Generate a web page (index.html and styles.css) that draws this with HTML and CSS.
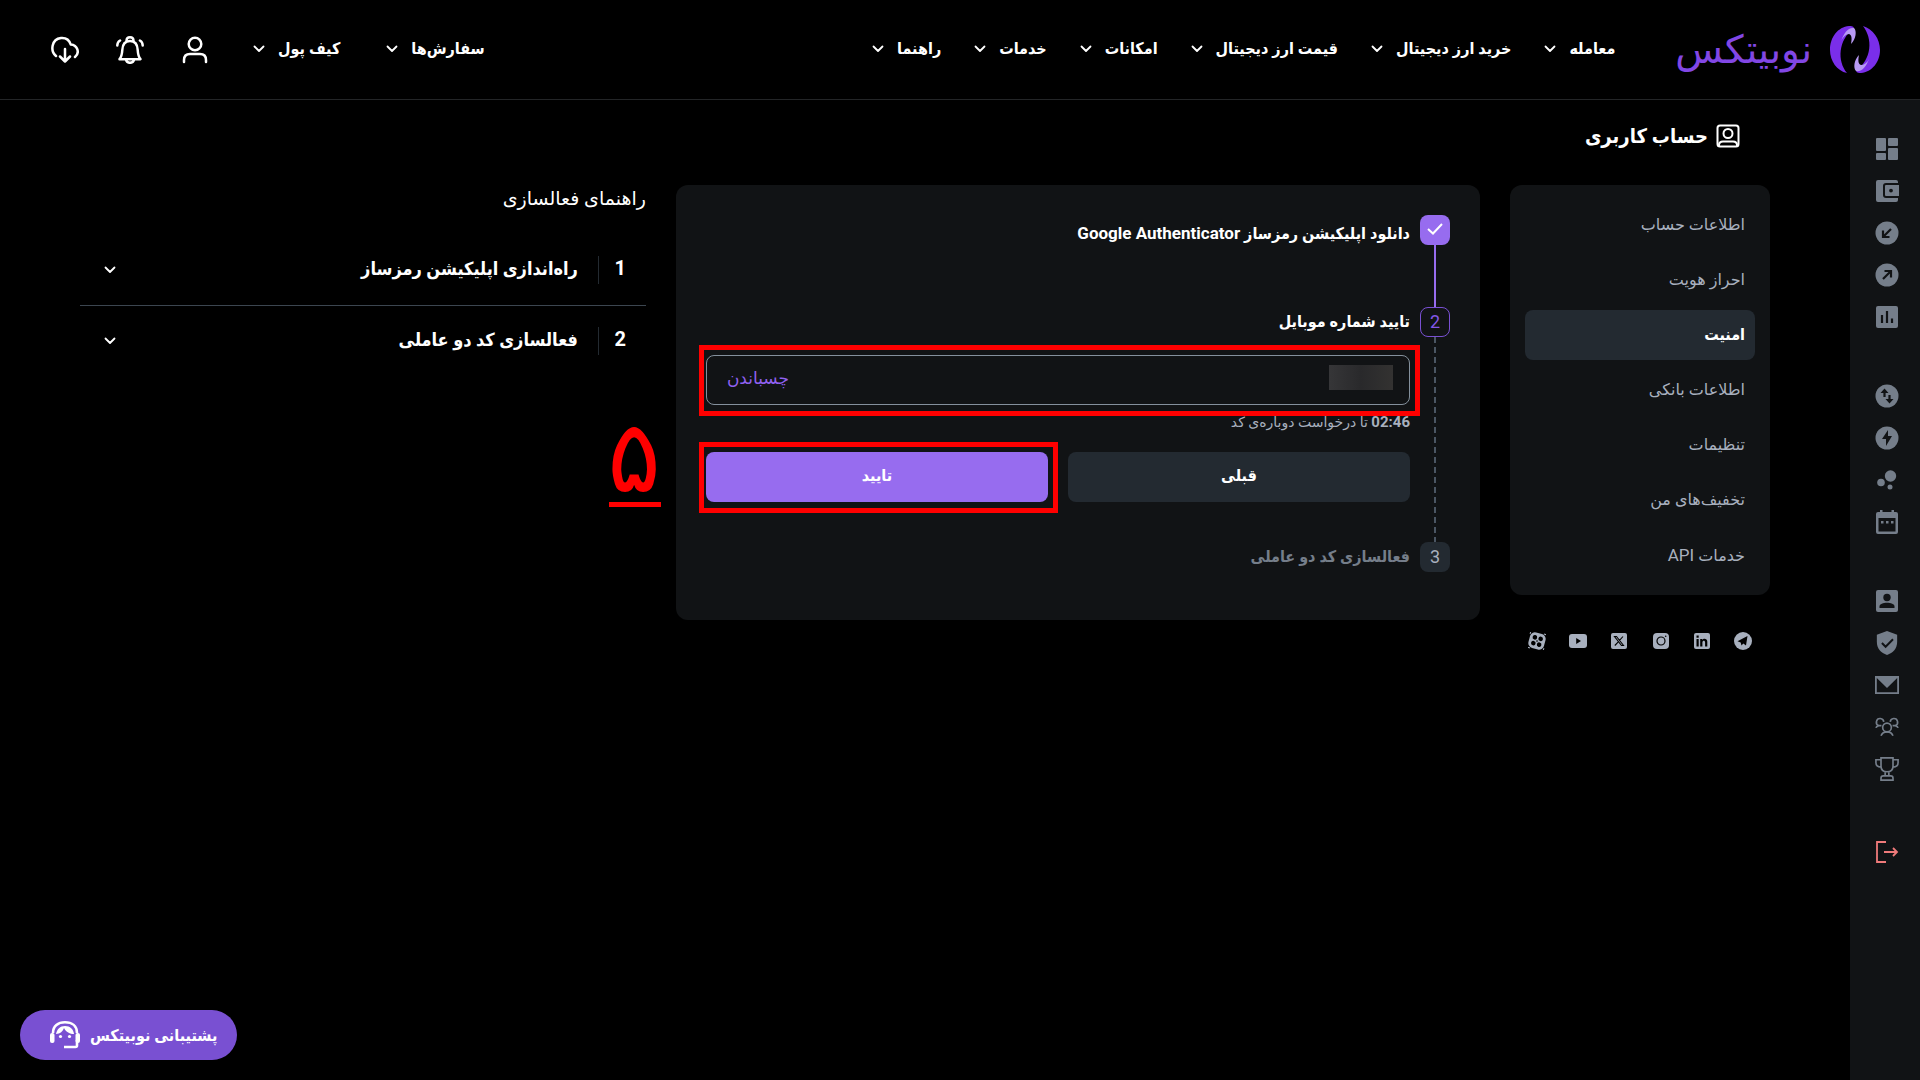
FILE: index.html
```html
<!DOCTYPE html>
<html lang="fa" dir="rtl">
  <head>
    <meta charset="UTF-8" />
    <meta name="viewport" content="width=device-width, initial-scale=1.0" />
    <title>نوبیتکس | امنیت</title>
    <link rel="stylesheet" href="styles.css">
  </head>
  <body>
    <svg class="sprite" aria-hidden="true">
      <symbol id="chevron" viewBox="0 0 12 12">
        <path d="M1.500 3.500 6 8l4.500-4.500" fill="none" stroke="currentColor" stroke-width="1.800" stroke-linecap="round" stroke-linejoin="round" />
      </symbol>
    </svg>

    <header class="header">
      <a href="#" class="logo">
        <svg class="logo-mark" viewBox="0 0 50 48">
          <path d="M19 0C8 1 0 11 0 24c0 11 7 21 17 23C7 35 8 14 24 2 23 0 21 0 19 0z" fill="#7a2eea" />
          <path d="M11 15C14 7 18 1 24 2c3 3 2 11-3 16 1-5 1-9-2-10-3 0-6 3-8 7z" fill="#b79af3" />
          <path d="M31 47c11-1 19-11 19-23 0-11-7-21-17-24 10 13 9 33-7 45 1 2 3 2 5 2z" fill="#7a2eea" />
          <path d="M39 33c-3 8-7 13-13 12-3-3-2-11 3-16-1 5-1 9 2 10 3 0 6-2 8-6z" fill="#b79af3" />
        </svg>
        <span class="logo-text">نوبیتکس</span>
      </a>
      <nav class="nav">
        <a href="#">معامله <svg class="chevron"><use href="#chevron" /></svg></a>
        <a href="#">خرید ارز دیجیتال <svg class="chevron"><use href="#chevron" /></svg></a>
        <a href="#">قیمت ارز دیجیتال <svg class="chevron"><use href="#chevron" /></svg></a>
        <a href="#">امکانات <svg class="chevron"><use href="#chevron" /></svg></a>
        <a href="#">خدمات <svg class="chevron"><use href="#chevron" /></svg></a>
        <a href="#">راهنما <svg class="chevron"><use href="#chevron" /></svg></a>
      </nav>
      <nav class="nav nav-user">
        <a href="#">سفارش‌ها <svg class="chevron"><use href="#chevron" /></svg></a>
        <a href="#">کیف پول <svg class="chevron"><use href="#chevron" /></svg></a>
      </nav>
      <div class="header-icons">
        <button aria-label="حساب">
          <svg viewBox="0 0 28 28"><circle cx="14" cy="8" r="6.300" /><path d="M3 26v-2c0-4 2-6 6-6h10c4 0 6 2 6 6v2" /></svg>
        </button>
        <button aria-label="اعلان‌ها">
          <svg viewBox="0 0 28 28"><path d="M3.500 23.200C5.500 21 6 19 6.300 14 6.600 7.500 9 5 14 5s7.400 2.500 7.700 9c.3 5 .8 7 2.800 9.200z" /><path d="M10.500 5C10.500 2.500 12 1.300 14 1.300S17.500 2.500 17.500 5M10 23.500c.5 2.500 2 3.300 4 3.300s3.500-.8 4-3.300M1.300 9.500c0-2.500 1-4 2.800-5M26.700 9.500c0-2.500-1-4-2.800-5" /></svg>
        </button>
        <button aria-label="دانلود اپلیکیشن">
          <svg viewBox="0 0 28 28"><path d="M5 20C-1 15 .5 3 10 2c5-.4 8.500 2.500 9.700 6.500 7 .5 9.300 8.500 4.300 12.500M14 13v12M9 20.500l5 5 5-5" /></svg>
        </button>
      </div>
    </header>

    <div class="page">
      <aside class="rail">
        <div class="rail-group">
          <a href="#" aria-label="داشبورد"><svg viewBox="0 0 24 24"><rect x="1" y="1" width="10" height="13" rx="1" /><rect x="13" y="1" width="10" height="8" rx="1" /><rect x="1" y="16" width="10" height="7" rx="1" /><rect x="13" y="11" width="10" height="12" rx="1" /></svg></a>
          <a href="#" aria-label="کیف پول"><svg viewBox="0 0 24 24"><path d="M3 1h18a2 2 0 0 1 2 2v1H11a3 3 0 0 0-3 3v9a3 3 0 0 0 3 3h12v2a2 2 0 0 1-2 2H3a2 2 0 0 1-2-2V3a2 2 0 0 1 2-2z" /><path fill-rule="evenodd" d="M11 6h13v11H11a1 1 0 0 1-1-1V7a1 1 0 0 1 1-1zm5 3.700a1.900 1.900 0 1 0 0 3.800 1.900 1.900 0 0 0 0-3.800z" /></svg></a>
          <a href="#" aria-label="واریز"><svg viewBox="0 0 24 24"><circle cx="12" cy="12" r="11.500" /><path class="cut" d="m16 8-8 8M8 9.500V16h6.500" /></svg></a>
          <a href="#" aria-label="برداشت"><svg viewBox="0 0 24 24"><circle cx="12" cy="12" r="11.500" /><path class="cut" d="m8 16 8-8M9.500 8H16v6.500" /></svg></a>
          <a href="#" aria-label="گزارش"><svg viewBox="0 0 24 24"><rect x="1" y="1" width="22" height="22" rx="2" /><path class="cut" d="M7 10v8M12 6v12M17 13.500V18" /></svg></a>
        </div>
        <div class="rail-group">
          <a href="#" aria-label="معامله"><svg viewBox="0 0 24 24"><circle cx="12" cy="12" r="11.500" /><path class="cut" d="M9.500 13V7M14.500 11v6" /><path class="hole" d="m9.500 4.500 4 4.500h-8zM14.500 19.500l4-4.500h-8z" /></svg></a>
          <a href="#" aria-label="معامله سریع"><svg viewBox="0 0 24 24"><circle cx="12" cy="12" r="11.500" /><path class="hole" d="M13 4 7 13h4v7l6-10h-4z" /></svg></a>
          <a href="#" aria-label="نمودار"><svg viewBox="0 0 24 24"><circle cx="15.500" cy="8" r="5.700" /><circle cx="6" cy="14.500" r="3.800" /><circle cx="15" cy="19" r="2.500" /></svg></a>
          <a href="#" aria-label="تقویم"><svg viewBox="0 0 24 24"><path fill-rule="evenodd" d="M5 0h2.500v2h9V0H19v2h2a2 2 0 0 1 2 2v18a2 2 0 0 1-2 2H3a2 2 0 0 1-2-2V4a2 2 0 0 1 2-2h2zM3.500 8v13.500h17V8zM6 11h2.500v2.500H6zm5 0h2.500v2.500H11zm5 0h2.500v2.500H16z" /></svg></a>
        </div>
        <div class="rail-group">
          <a href="#" aria-label="حساب کاربری"><svg viewBox="0 0 24 24"><rect x="1" y="1" width="22" height="22" rx="2" /><circle class="hole" cx="12" cy="8.500" r="3.700" /><path class="hole" d="M4.500 19v-1.500c0-5 15-5 15 0V19z" /></svg></a>
          <a href="#" aria-label="امنیت"><svg viewBox="0 0 22 26"><path d="M11 0 0 4v8c0 7 4.500 12 11 14 6.500-2 11-7 11-14V4z" /><path class="cut" d="m5.500 13 4 4 8-8" /></svg></a>
          <a href="#" aria-label="پیام‌ها"><svg viewBox="0 0 24 24"><path fill-rule="evenodd" d="M0 3h24v18H0zm1.800 2v14.300h20.400V5L12 15z" /></svg></a>
          <a href="#" aria-label="معرفی دوستان"><svg class="line" viewBox="0 0 26 24"><circle cx="13" cy="12.500" r="4.700" /><path d="M6.500 21.500c1-2.500 3-4.200 6.500-4.200s5.500 1.700 6.500 4.200M9.500 6.500a4 4 0 1 0-5.500 4C2.500 11 1.300 11.700 1 13M4 10.500h3M16.500 6.500a4 4 0 1 1 5.500 4c1.500.5 2.700 1.200 3 2.500M22 10.500h-3" /></svg></a>
          <a href="#" aria-label="جوایز"><svg class="line" viewBox="0 0 26 26"><path d="M6.500 1h13v9c0 4-2.500 6-6.500 6s-6.500-2-6.500-6zM6.500 3H1v3c0 3 2 5 5.500 5M19.500 3H25v3c0 3-2 5-5.500 5M11 16v4M15 16v4M6.500 25v-2c0-1.500 1-2.500 2.500-2.500h8c1.500 0 2.500 1 2.500 2.500v2z" /></svg></a>
        </div>
        <a href="#" class="logout" aria-label="خروج"><svg class="line" viewBox="0 0 24 24"><path d="M11 2H2v20h9M9 12h13M18 8l4 4-4 4" /></svg></a>
      </aside>

      <main class="main">
        <h1 class="page-title">
          <svg viewBox="0 0 24 24"><rect x="1.500" y="1.500" width="21" height="21" rx="2.500" /><circle cx="12" cy="9.500" r="4.500" /><path d="M3 22v-1c0-2.500 2-3.500 4-3.500h10c2 0 4 1 4 3.500v1" /></svg>
          حساب کاربری
        </h1>

        <div class="columns">
          <div>
            <ul class="menu">
              <li><a href="#">اطلاعات حساب</a></li>
              <li><a href="#">احراز هویت</a></li>
              <li><a href="#" class="active">امنیت</a></li>
              <li><a href="#">اطلاعات بانکی</a></li>
              <li><a href="#">تنظیمات</a></li>
              <li><a href="#">تخفیف‌های من</a></li>
              <li><a href="#">خدمات <span class="latin">API</span></a></li>
            </ul>
            <div class="socials">
              <a href="#" aria-label="تلگرام"><svg viewBox="0 0 18 18"><circle cx="9" cy="9" r="9" /><path class="hole" d="M13.500 4 3.500 9.200l3.200 1.200.8 3.200 1.800-2 2.700 2z" /></svg></a>
              <a href="#" aria-label="لینکدین"><svg viewBox="0 0 18 18"><rect x="1" y="1" width="16" height="16" rx="2" /><path class="hole" d="M3.500 7h2.200v7.500H3.500zM3.500 3.500h2.200v2.200H3.500zM7.200 7h2.100v1c1.200-1.900 5-1.600 5 1.700v4.800h-2.200v-4c0-2.400-2.700-2.100-2.700 0v4H7.200z" /></svg></a>
              <a href="#" aria-label="اینستاگرام"><svg viewBox="0 0 18 18"><rect x="1" y="1" width="16" height="16" rx="4" /><circle cx="9" cy="9" r="4" fill="none" stroke="#000" stroke-width="1.200" /><circle class="hole" cx="13.700" cy="4.300" r=".8" /></svg></a>
              <a href="#" aria-label="ایکس"><svg viewBox="0 0 18 18"><rect x="1" y="1" width="16" height="16" rx="2" /><path d="M4.500 4.500h2l7 9h-2zM13 4.500l-3.500 3.800M8.300 9.800 4.800 13.500" fill="none" stroke="#000" stroke-width="1.100" /></svg></a>
              <a href="#" aria-label="یوتیوب"><svg viewBox="0 0 18 18"><rect x="0" y="2" width="18" height="14" rx="3" /><path class="hole" d="m7.200 6 4.800 3-4.800 3z" /></svg></a>
              <a href="#" aria-label="آپارات"><svg viewBox="0 0 18 18"><g transform="rotate(15 9 9)"><rect x="1" y="1" width="16" height="16" rx="5" /><circle class="hole" cx="6" cy="6" r="2.300" /><circle class="hole" cx="12" cy="6" r="2.300" /><circle class="hole" cx="6" cy="12" r="2.300" /><circle class="hole" cx="12" cy="12" r="2.300" /><circle class="hole" cx="9" cy="9" r=".8" /><path d="M.5 4V2.500a2 2 0 0 1 2-2H4M14 .5h1.500a2 2 0 0 1 2 2V4M17.500 14v1.500a2 2 0 0 1-2 2H14M4 17.500H2.500a2 2 0 0 1-2-2V14" fill="none" stroke="currentColor" /></g></svg></a>
            </div>
          </div>

          <section class="card">
            <div class="step done">
              <div class="step-track">
                <span class="step-box"><svg viewBox="0 0 16 12"><path d="m1 6 5 4.500L15 1" fill="none" stroke="#fff" stroke-width="2" /></svg></span>
              </div>
              <h2 class="step-title">دانلود اپلیکیشن رمزساز <span class="latin">Google Authenticator</span></h2>
            </div>

            <div class="step current">
              <div class="step-track"><span class="step-box">2</span></div>
              <form class="step-body" onsubmit="return false">
                <h2 class="step-title"><label for="code">تایید شماره موبایل</label></h2>
                <div class="field">
                  <input type="text" id="code" />
                  <span class="masked"></span>
                  <button type="button" class="paste">چسباندن</button>
                  <span class="highlight"></span>
                </div>
                <p class="timer"><b>02:46</b> تا درخواست دوباره‌ی کد</p>
                <div class="actions">
                  <button type="button" class="btn">قبلی</button>
                  <div class="confirm">
                    <button type="submit" class="btn btn-primary">تایید</button>
                    <span class="highlight"></span>
                    <span class="step-mark">۵</span>
                  </div>
                </div>
              </form>
            </div>

            <div class="step">
              <div class="step-track"><span class="step-box">3</span></div>
              <h2 class="step-title">فعالسازی کد دو عاملی</h2>
            </div>
          </section>

          <section class="guide">
            <h2>راهنمای فعالسازی</h2>
            <button class="guide-item">
              <span class="guide-number">1</span>
              <span class="guide-text">راه‌اندازی اپلیکیشن رمزساز</span>
              <svg class="chevron"><use href="#chevron" /></svg>
            </button>
            <button class="guide-item">
              <span class="guide-number">2</span>
              <span class="guide-text">فعالسازی کد دو عاملی</span>
              <svg class="chevron"><use href="#chevron" /></svg>
            </button>
          </section>
        </div>
      </main>
    </div>

    <button class="support">
      پشتیبانی نوبیتکس
      <svg viewBox="0 0 30 28"><path d="M3 12C3 5 8 1.300 15 1.300S27 5 27 12M27 19v5.500c0 .8-.7 1.500-1.500 1.500H14" fill="none" stroke="#fff" stroke-width="2.600" /><rect x="0" y="12" width="4.500" height="10" rx="2" /><rect x="25.500" y="12" width="4.500" height="10" rx="2" /><path d="M6 13c1-5 4-8 9-8s8.500 3 9 8c-4 0-8-2-10-6-1 3-4 6-8 6z" /><circle cx="10.500" cy="15.500" r="1.600" /><circle cx="19.500" cy="15.500" r="1.600" /></svg>
    </button>
  </body>
</html>
```
FILE: styles.css
```css
* {
  box-sizing: border-box;
  margin: 0;
  padding: 0;
}
body {
  display: flex;
  flex-direction: column;
  min-height: 100vh;
  background-color: #000;
  color: #fff;
  font-family: Roboto, "DejaVu Sans", sans-serif;
  font-size: 16px;
}
a {
  color: inherit;
  text-decoration: none;
}
button {
  border: none;
  background: none;
  color: inherit;
  font-family: inherit;
  cursor: pointer;
}
svg {
  display: block;
  fill: currentColor;
}
/* bold text uses the narrower cut */
.nav,
.page-title,
.menu .active,
.step-title,
.btn,
.guide-item,
.support {
  font-family: Roboto, "DejaVu Sans Condensed", "DejaVu Sans", sans-serif;
  font-weight: bold;
}
.latin {
  font-size: 17px;
}
.sprite {
  position: absolute;
  width: 0;
  height: 0;
}
.chevron {
  width: 12px;
  height: 12px;
}

/* header */
.header {
  display: flex;
  align-items: center;
  height: 100px;
  padding: 0 40px 0 51px;
  border-bottom: 1px solid #232527;
}
.logo {
  display: flex;
  align-items: center;
  gap: 18px;
  margin-left: 60px;
}
.logo-mark {
  width: 50px;
  height: 48px;
}
.logo-text {
  color: #8247e5;
  font-size: 39px;
  line-height: 40px;
}
.nav {
  display: flex;
  gap: 33px;
  padding-bottom: 2px;
  font-size: 16px;
  white-space: nowrap;
}
.nav a {
  display: flex;
  align-items: center;
  gap: 13px;
}
.nav-user {
  gap: 46px;
  margin-right: auto;
}
.header-icons {
  display: flex;
  gap: 37px;
  margin-right: 44px;
}
.header-icons svg {
  width: 28px;
  height: 28px;
  fill: none;
  stroke: #fff;
  stroke-width: 2.500px;
  stroke-linecap: round;
  stroke-linejoin: round;
}

.page {
  display: flex;
  flex: 1;
}

/* icon rail */
.rail {
  display: flex;
  flex-direction: column;
  align-items: center;
  gap: 55px;
  width: 70px;
  padding: 37px 0 0 3px;
  background-color: #111315;
  color: #757e8a;
}
.rail-group {
  display: flex;
  flex-direction: column;
  gap: 18px;
}
.rail svg {
  width: 24px;
  height: 24px;
  overflow: visible;
}
.rail .cut {
  fill: none;
  stroke: #111315;
  stroke-width: 2.200px;
}
.rail .hole {
  fill: #111315;
}
.rail .line {
  fill: none;
  stroke: currentColor;
  stroke-width: 1.800px;
}
.rail .logout {
  padding-top: 4px;
  color: #ef7a7a;
}

/* main */
.main {
  flex: 1;
  padding: 20px 80px;
}
.page-title {
  display: flex;
  align-items: center;
  gap: 8px;
  height: 32px;
  margin: 0 30px 33px 0;
  font-size: 20px;
}
.page-title svg {
  width: 24px;
  height: 24px;
  fill: none;
  stroke: #fff;
  stroke-width: 2px;
}
.columns {
  display: grid;
  grid-template-columns: 260px minmax(0, 27fr) minmax(0, 19fr);
  gap: 30px;
  align-items: start;
}
.menu {
  display: flex;
  flex-direction: column;
  gap: 5px;
  padding: 15px;
  border-radius: 12px;
  background-color: #111315;
  color: #a8b0be;
  list-style: none;
}
.menu a {
  display: block;
  height: 50px;
  padding: 0 10px;
  border-radius: 8px;
  line-height: 50px;
}
.menu .active {
  background-color: #232a31;
  color: #fff;
}
.socials {
  display: flex;
  justify-content: space-between;
  padding: 37px 18px;
  color: #a8b0be;
}
.socials svg {
  width: 18px;
  height: 18px;
}
.socials .hole {
  fill: #000;
}

/* activation steps */
.card {
  padding: 30px 30px 48px;
  border-radius: 12px;
  background-color: #111315;
}
.step {
  display: flex;
  gap: 10px;
  color: #757e8a;
}
.step-track {
  display: flex;
  flex-direction: column;
  align-items: center;
}
.step-box {
  display: flex;
  align-items: center;
  justify-content: center;
  width: 30px;
  height: 30px;
  padding-bottom: 2px;
  border-radius: 8px;
  background-color: #232a31;
  color: #a8b0be;
  font-size: 18px;
}
.step-box svg {
  width: 16px;
  height: 12px;
}
.step-title {
  font-size: 16px;
  line-height: 30px;
}
.done {
  min-height: 92px;
  color: #fff;
}
.done .step-title {
  line-height: 36px;
}
.done .step-box {
  background-color: #976cef;
}
.done .step-track::after {
  content: "";
  flex: 1;
  width: 2px;
  background-color: #976cef;
}
.current {
  color: #fff;
}
.current .step-box {
  border: 1px solid #7950d2;
  background: none;
  color: #8457e8;
}
.current .step-track::after {
  content: "";
  flex: 1;
  width: 2px;
  background: repeating-linear-gradient(#4b5663 0 6px, transparent 6px 10px);
}
.step-body {
  flex: 1;
  padding-bottom: 40px;
}
.field {
  position: relative;
  height: 50px;
  margin-top: 18px;
}
.field input {
  width: 100%;
  height: 50px;
  padding: 0 16px;
  border: 1px solid #84909c;
  border-radius: 8px;
  background: none;
  color: #fff;
  font-size: 16px;
}
.masked {
  position: absolute;
  top: 10px;
  right: 17px;
  width: 64px;
  height: 25px;
  background: linear-gradient(90deg, #363638, #29292b 50%, #333231);
}
.paste {
  position: absolute;
  top: 0;
  left: 21px;
  height: 46px;
  color: #9061f0;
  font-size: 17px;
}
.highlight {
  position: absolute;
  inset: -10px -10px -11px -7px;
  border: 5px solid #f00;
  pointer-events: none;
}
.timer {
  margin-bottom: 15px;
  padding-top: 2px;
  color: #a8b0be;
  font-size: 14px;
  line-height: 30px;
}
.timer b {
  font-size: 15px;
}
.actions {
  display: grid;
  grid-template-columns: 1fr 1fr;
  gap: 20px;
}
.btn {
  width: 100%;
  height: 50px;
  padding-bottom: 4px;
  border-radius: 8px;
  background-color: #232a31;
  font-size: 16px;
}
.btn-primary {
  background-color: #976cef;
}
.confirm {
  position: relative;
}
.step-mark {
  position: absolute;
  right: 100%;
  bottom: -5px;
  width: 52px;
  margin-right: 45px;
  border-bottom: 5px solid #f00;
  color: #f00;
  font-size: 100px;
  line-height: 90px;
  text-align: center;
}

/* guide */
.guide h2 {
  height: 50px;
  font-size: 19px;
  font-weight: normal;
  line-height: 28px;
}
.guide-item {
  display: flex;
  align-items: center;
  width: 100%;
  height: 70px;
  padding: 0 20px 0 24px;
  font-size: 18px;
  text-align: right;
}
.guide-item + .guide-item {
  border-top: 1px solid #3c4650;
  height: 71px;
}
.guide-number {
  width: 28px;
  padding-bottom: 4px;
  border-left: 1px solid #232a31;
  font-size: 20px;
  line-height: 24px;
}
.guide-text {
  flex: 1;
  padding: 0 20px 4px 0;
}

.support {
  display: flex;
  align-items: center;
  gap: 10px;
  position: fixed;
  bottom: 20px;
  left: 20px;
  height: 50px;
  padding: 0 20px 0 30px;
  border-radius: 25px;
  background-color: #7950d2;
  font-size: 16px;
}
.support svg {
  width: 30px;
  height: 28px;
}
```
